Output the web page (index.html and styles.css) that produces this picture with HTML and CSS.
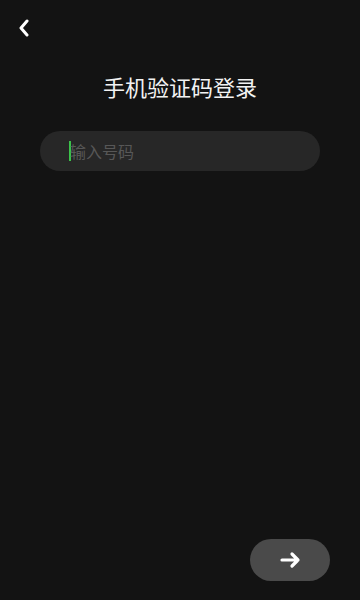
FILE: index.html
```html
<!DOCTYPE html>
<html lang="zh">
<head>
    <meta charset="UTF-8">
    <meta name="viewport" content="width=device-width, initial-scale=1.0">
    <title>手机验证码登录</title>
    <link rel="stylesheet" href="styles.css">
</head>
<body>
    <div class="page">
        <div class="topbar">
            <button class="back" aria-label="返回">
                <svg width="14" height="18" viewBox="0 0 14 18">
                    <path d="M10 2 L4 9 L10 16" fill="none" stroke="#fff" stroke-width="3" stroke-linecap="round" stroke-linejoin="round"/>
                </svg>
            </button>
        </div>

        <h1 class="title">手机验证码登录</h1>

        <div class="field">
            <span class="caret"></span>
            <span class="placeholder">输入号码</span>
        </div>

        <div class="spacer"></div>

        <div class="footer">
            <button class="next" aria-label="下一步">
                <svg width="22" height="18" viewBox="0 0 22 18">
                    <path d="M3 9 H19 M13 3 L19 9 L13 15" fill="none" stroke="#fff" stroke-width="3.2" stroke-linecap="round" stroke-linejoin="round"/>
                </svg>
            </button>
        </div>
    </div>
</body>
</html>
```

FILE: styles.css
```css
html, body {
    margin: 0;
    padding: 0;
    background-color: #131313;
}

body {
    font-family: "Noto Sans CJK SC", "Noto Sans", sans-serif;
    color: #fff;
}

.page {
    height: 600px;
    display: flex;
    flex-direction: column;
}

.topbar {
    height: 56px;
    display: flex;
    align-items: flex-start;
    padding: 18px 0 0 14px;
    box-sizing: border-box;
}

.back {
    background: none;
    border: none;
    padding: 0;
    width: 20px;
    height: 20px;
    display: flex;
    align-items: center;
    justify-content: center;
}

.title {
    margin: 14px 0 0 0;
    text-align: center;
    font-size: 22px;
    font-weight: 400;
    line-height: 32px;
    color: #f2f2f2;
}

.field {
    margin: 29px 40px 0 40px;
    height: 40px;
    border-radius: 20px;
    background-color: #272727;
    display: flex;
    align-items: center;
    padding-left: 29px;
}

.caret {
    width: 2px;
    height: 20px;
    background-color: #3bc24a;
    margin-right: -1px;
}

.placeholder {
    font-size: 16px;
    color: #575757;
    margin-top: -1px;
}

.spacer {
    flex: 1;
}

.footer {
    display: flex;
    justify-content: flex-end;
    padding: 0 30px 19px 0;
}

.next {
    width: 80px;
    height: 42px;
    border: none;
    border-radius: 21px;
    background-color: #4a4a4a;
    display: flex;
    align-items: center;
    justify-content: center;
    padding: 0;
}
```
